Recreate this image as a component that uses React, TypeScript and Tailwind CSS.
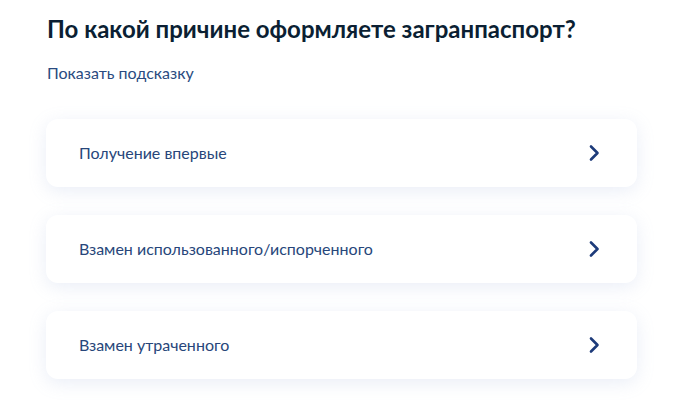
const reasons = [
  'Получение впервые',
  'Взамен использованного/испорченного',
  'Взамен утраченного',
];

function Chevron() {
  return (
    <svg className="w-[14px] h-[18px]" viewBox="0 0 14 18" fill="none">
      <path d="M4 2.5 L10.5 9 L4 15.5" stroke="#1d3b7a" strokeWidth={2.6} strokeLinecap="round" strokeLinejoin="round" />
    </svg>
  );
}

export default function App() {
  return (
    <div className="w-[675px] h-[419px] overflow-hidden bg-white font-['Lato','Noto_Sans',sans-serif] pl-[46px] pr-[38px] pt-[13px]">
      <h1 className="text-[24px] leading-[32px] font-bold text-[#0b1f33] pl-px">
        По какой причине оформляете загранпаспорт?
      </h1>
      <div className="mt-[18px] text-[16px] leading-[20px] text-[#2a4b80] pl-px">
        Показать подсказку
      </div>

      <div className="mt-[36px] flex flex-col gap-[28px]">
        {reasons.map((r) => (
          <div
            key={r}
            className="h-[68px] rounded-[12px] bg-white flex items-center justify-between pl-[33px] pr-[36px] shadow-[0_4px_18px_rgba(140,160,210,0.18)]"
          >
            <span className="text-[16px] text-[#27467a]">{r}</span>
            <Chevron />
          </div>
        ))}
      </div>
    </div>
  );
}
